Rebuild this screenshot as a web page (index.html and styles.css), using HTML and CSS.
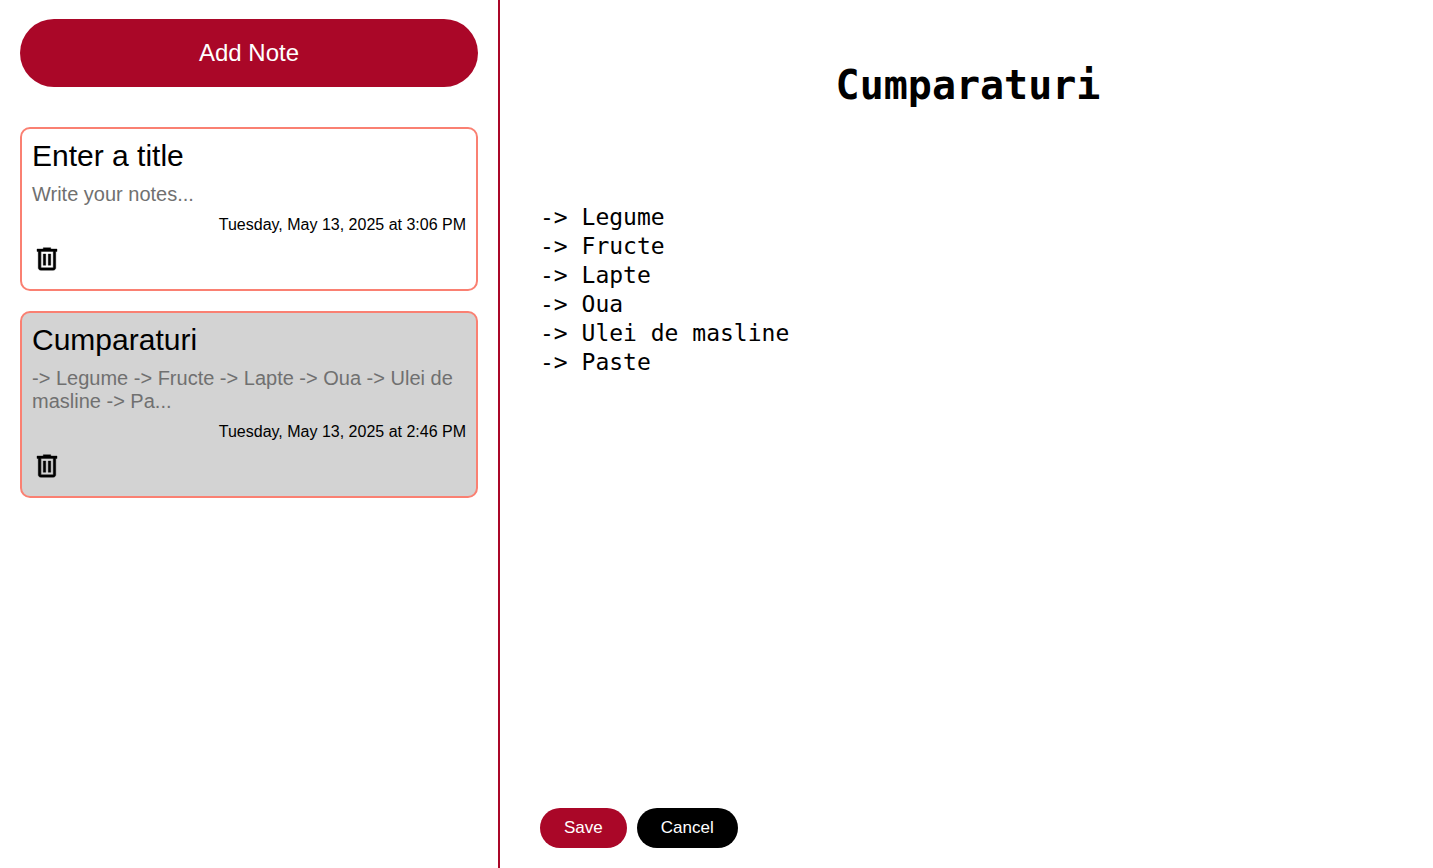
FILE: index.html
```html
<!DOCTYPE html>
<html lang="en">
<head>
<meta charset="utf-8">
<title>Notes</title>
<link rel="stylesheet" href="styles.css">
</head>
<body>
<aside class="sidebar">
  <button class="add" type="button">Add Note</button>
  <div class="notes">
    <article class="note">
      <h2 class="note-title">Enter a title</h2>
      <p class="note-text">Write your notes...</p>
      <p class="note-date">Tuesday, May 13, 2025 at 3:06 PM</p>
      <button class="delete" type="button" aria-label="Delete note"><svg viewBox="0 -960 960 960" width="30" height="30"><path d="M280-120q-33 0-56.500-23.500T200-200v-520h-40v-80h200v-40h240v40h200v80h-40v520q0 33-23.500 56.500T680-120H280Zm400-600H280v520h400v-520ZM360-280h80v-360h-80v360Zm160 0h80v-360h-80v360ZM280-720v520-520Z"/></svg></button>
    </article>
    <article class="note selected">
      <h2 class="note-title">Cumparaturi</h2>
      <p class="note-text">-&gt; Legume -&gt; Fructe -&gt; Lapte -&gt; Oua -&gt; Ulei de masline -&gt; Pa...</p>
      <p class="note-date">Tuesday, May 13, 2025 at 2:46 PM</p>
      <button class="delete" type="button" aria-label="Delete note"><svg viewBox="0 -960 960 960" width="30" height="30"><path d="M280-120q-33 0-56.500-23.500T200-200v-520h-40v-80h200v-40h240v40h200v80h-40v520q0 33-23.500 56.500T680-120H280Zm400-600H280v520h400v-520ZM360-280h80v-360h-80v360Zm160 0h80v-360h-80v360ZM280-720v520-520Z"/></svg></button>
    </article>
  </div>
</aside>
<main class="editor">
  <input class="title-input" type="text" aria-label="Title" value="Cumparaturi">
  <textarea class="body-input" aria-label="Note" spellcheck="false">-&gt; Legume
-&gt; Fructe
-&gt; Lapte
-&gt; Oua
-&gt; Ulei de masline
-&gt; Paste</textarea>
  <div class="actions">
    <button class="action save" type="button">Save</button>
    <button class="action cancel" type="button">Cancel</button>
  </div>
</main>
</body>
</html>
```
FILE: styles.css
```css
* { box-sizing: border-box; }
body {
  margin: 0;
  display: flex;
  min-height: 100vh;
  font-family: "Liberation Sans", Arial, sans-serif;
  background: #fff;
  color: #000;
}
button { border: 0; font-family: inherit; cursor: pointer; }
.sidebar {
  width: 500px;
  flex: none;
  padding: 19px 20px 20px;
  border-right: 2px solid #aa0728;
}
.add {
  display: block;
  width: 100%;
  padding: 20px;
  border-radius: 40px;
  background: #aa0728;
  color: #fff;
  font-size: 24px;
  line-height: 28px;
}
.notes { display: flex; flex-direction: column; gap: 20px; margin-top: 40px; }
.note { padding: 10px 10px 15px; border: 2px solid salmon; border-radius: 10px; }
.selected { background: lightgray; }
.note-title { margin: 0; font-size: 30px; font-weight: 400; line-height: 34px; }
.note-text { margin: 10px 0; font-size: 20px; line-height: 23px; color: #707070; }
.note-date { margin: 0 0 10px; font-size: 16px; line-height: 18px; text-align: right; }
.delete { display: block; padding: 0; background: transparent; }
.delete svg { display: block; stroke: #000; stroke-width: 12; }
.editor { flex: 1; min-width: 0; display: flex; flex-direction: column; padding: 20px 37px 20px 40px; }
.title-input, .body-input {
  width: 100%;
  padding: 0;
  border: 0;
  outline: 0;
  resize: none;
  background: transparent;
  color: #000;
  font-family: Consolas, "DejaVu Sans Mono", monospace;
}
.title-input { margin-top: 40px; font-size: 40px; font-weight: 700; line-height: 50px; text-align: center; }
.body-input { flex: 1; margin-top: 93px; font-size: 23px; line-height: 29px; }
.actions { display: flex; gap: 10px; }
.action { padding: 11px 24px; border-radius: 20px; font-size: 17px; line-height: 18px; color: #fff; }
.save { background: #aa0728; }
.cancel { background: #000; }
```
